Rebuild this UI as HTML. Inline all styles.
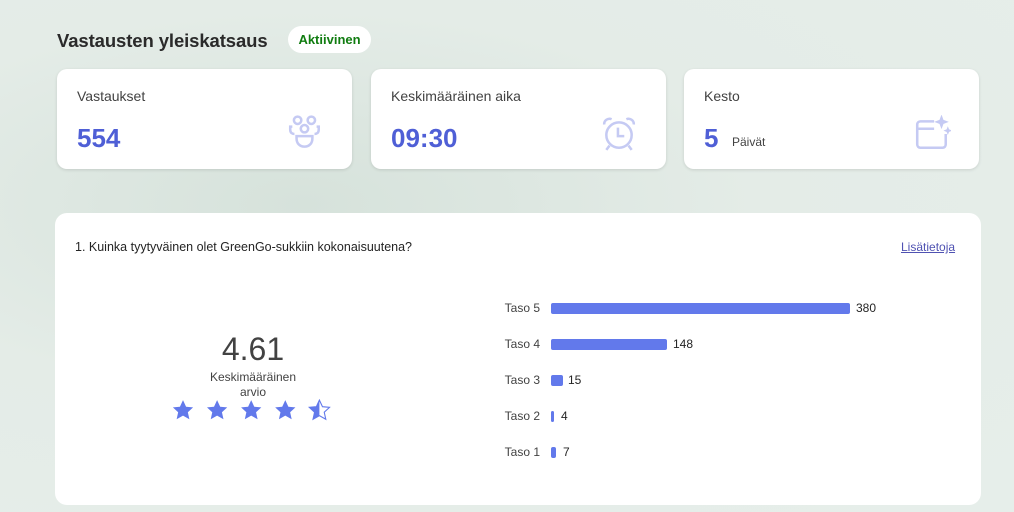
<!DOCTYPE html>
<html><head><meta charset="utf-8"><style>
*{margin:0;padding:0;box-sizing:border-box}
body{width:1014px;height:512px;overflow:hidden;font-family:"Liberation Sans",sans-serif;background:radial-gradient(ellipse at 30% 40%,#d6e2db 0%,#e4ece7 45%,#e6eeea 100%);position:relative;color:#242424}
.abs{position:absolute}
.title{left:57px;top:30px;font-size:18.5px;font-weight:bold;color:#2a2a2a;letter-spacing:-0.1px}
.badge{left:288px;top:26px;width:83px;height:27px;border-radius:14px;background:#fff;color:#107c10;font-size:13px;font-weight:bold;text-align:center;line-height:27px}
.card{background:#fff;border-radius:10px;box-shadow:0 1px 3px rgba(0,0,0,.12);top:69px;height:100px;width:295px}
.card .lbl{position:absolute;left:20px;top:19px;font-size:14px;color:#424242}
.card .num{position:absolute;left:20px;top:54px;font-size:26px;font-weight:bold;color:#4f5fd6}
.card svg{position:absolute;right:28px;top:46px}
.big{left:55px;top:213px;width:926px;height:292px;background:#fff;border-radius:12px}
.row{position:absolute;left:0;height:12px;font-size:12px}
.row .t{position:absolute;width:60px;text-align:right;top:-2px;color:#424242}
.bar{position:absolute;left:551px;top:0;height:11px;background:#6279eb;border-radius:2px}
.v{position:absolute;top:-2px;color:#242424}
</style></head><body>
<div class="abs title">Vastausten yleiskatsaus</div>
<div class="abs badge">Aktiivinen</div>

<div class="abs card" style="left:57px"><div class="lbl">Vastaukset</div><div class="num">554</div>
<svg width="38" height="38" viewBox="0 0 36 36" fill="none" stroke="#c5caf3" stroke-width="2.4"><circle cx="11" cy="5" r="3.5"/><circle cx="24" cy="5" r="3.5"/><circle cx="17.5" cy="13" r="3.5"/><path d="M6 11h-2v3c0 3 2 4 4 4M29 11h2v3c0 3-2 4-4 4"/><path d="M10 20h15v2c0 5-3 8-7.5 8S10 27 10 22z"/></svg></div>
<div class="abs card" style="left:371px"><div class="lbl">Keskimääräinen aika</div><div class="num">09:30</div>
<svg width="38" height="38" viewBox="0 0 36 36" fill="none" stroke="#c5caf3" stroke-width="2.4"><circle cx="18" cy="19" r="12"/><path d="M17 12v8h6M4 9a5 5 0 0 1 7-5M32 9a5 5 0 0 0-7-5M9 29l-3 4M27 29l3 4"/></svg></div>
<div class="abs card" style="left:684px"><div class="lbl">Kesto</div><div class="num">5</div><div style="position:absolute;left:48px;top:66px;font-size:12px;color:#424242">Päivät</div>
<svg width="38" height="38" viewBox="0 0 36 36" fill="none" stroke="#c5caf3" stroke-width="2.4"><path d="M20 6H7a3 3 0 0 0-3 3v19a3 3 0 0 0 3 3h21a3 3 0 0 0 3-3V18M4 13h16"/><path d="M27 1l1.5 4 4 1.5-4 1.5L27 12l-1.5-4-4-1.5 4-1.5z" fill="#c5caf3" stroke-width="1"/><path d="M33 12l.8 2 2 .8-2 .8-.8 2-.8-2-2-.8 2-.8z" fill="#c5caf3" stroke-width="1"/></svg></div>

<div class="abs big">
<div style="position:absolute;left:20px;top:27px;font-size:12.5px;color:#242424">1. Kuinka tyytyväinen olet GreenGo-sukkiin kokonaisuutena?</div>
<div style="position:absolute;left:846px;top:27px;font-size:12px;color:#4f52b2;text-decoration:underline">Lisätietoja</div>
<div style="position:absolute;left:98px;top:118px;width:200px;text-align:center;font-size:32px;color:#424242">4.61</div>
<div style="position:absolute;left:148px;top:157px;width:100px;text-align:center;font-size:12px;color:#424242;line-height:15px">Keskimääräinen<br>arvio</div>
<svg style="position:absolute;left:117px;top:186px" width="160" height="24" viewBox="0 0 160 24">
<defs><path id="s" d="M10 1l2.8 6 6.4.6-4.8 4.4 1.4 6.4L10 15.1 4.2 18.4l1.4-6.4L.8 7.6l6.4-.6z"/><clipPath id="h"><rect x="0" y="0" width="10" height="22"/></clipPath></defs>
<g transform="translate(0,0) scale(1.1)"><use href="#s" x="0" fill="#6279eb"/><use href="#s" x="31" fill="#6279eb"/><use href="#s" x="62" fill="#6279eb"/><use href="#s" x="93" fill="#6279eb"/>
<g transform="translate(124,0)"><use href="#s" fill="none" stroke="#6279eb" stroke-width="1"/><use href="#s" fill="#6279eb" clip-path="url(#h)"/></g></g>
</svg>
</div>
<div class="abs" style="left:0;top:0;width:1014px">
<div class="row" style="top:303px"><span class="t" style="left:480px">Taso 5</span><div class="bar" style="width:299px"></div><span class="v" style="left:856px">380</span></div>
<div class="row" style="top:339px"><span class="t" style="left:480px">Taso 4</span><div class="bar" style="width:116px"></div><span class="v" style="left:673px">148</span></div>
<div class="row" style="top:375px"><span class="t" style="left:480px">Taso 3</span><div class="bar" style="width:12px"></div><span class="v" style="left:568px">15</span></div>
<div class="row" style="top:411px"><span class="t" style="left:480px">Taso 2</span><div class="bar" style="width:3px"></div><span class="v" style="left:561px">4</span></div>
<div class="row" style="top:447px"><span class="t" style="left:480px">Taso 1</span><div class="bar" style="width:5px"></div><span class="v" style="left:563px">7</span></div>
</div>
</body></html>
